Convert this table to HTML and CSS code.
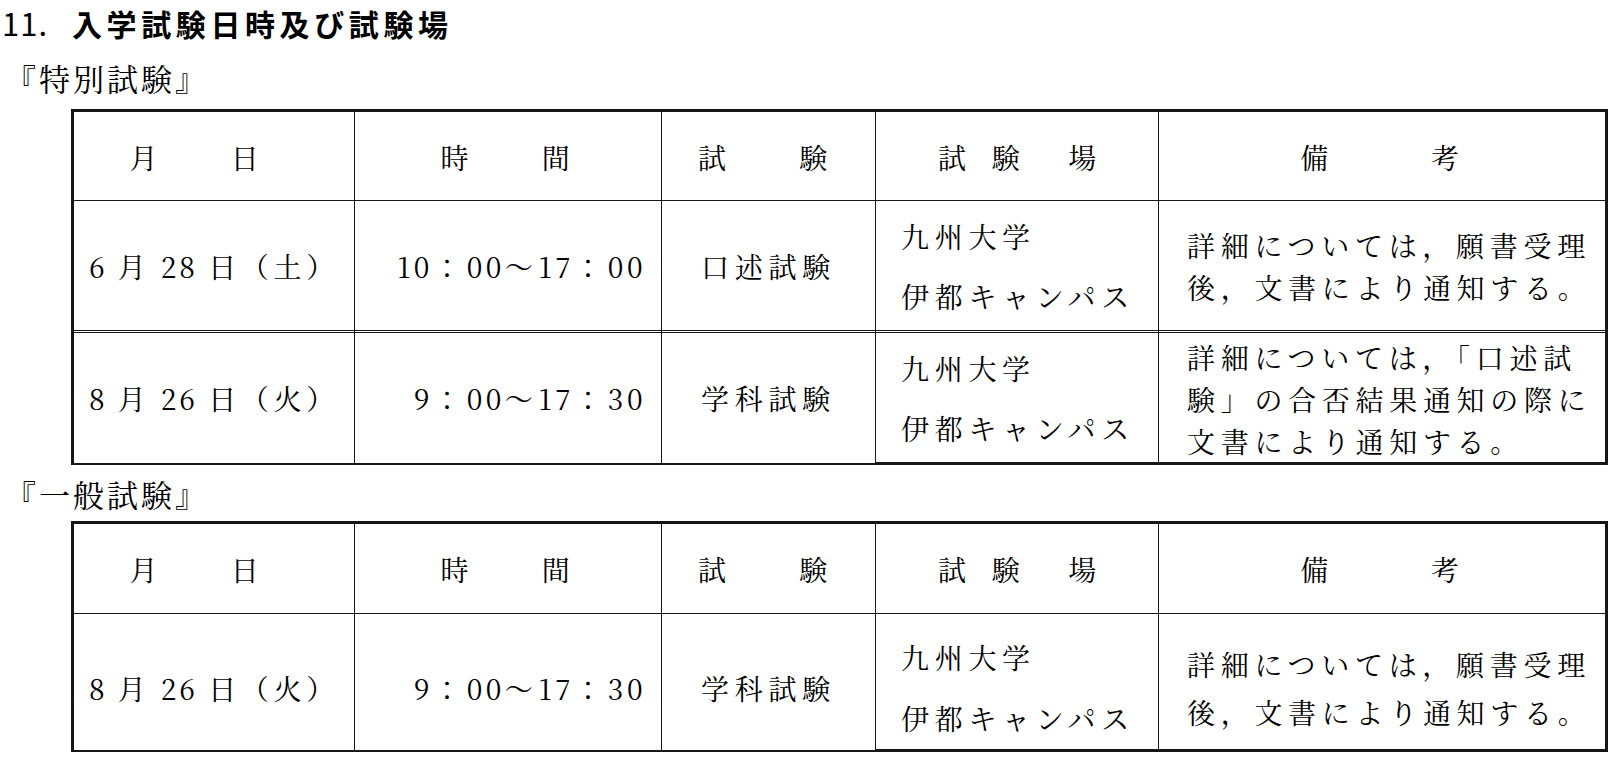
FILE: index.html
```html
<!DOCTYPE html>
<html lang="ja">
<head>
<meta charset="utf-8">
<title>入学試験日時及び試験場</title>
<link rel="stylesheet" href="styles.css">
</head>
<body>
<h1 class="title"><span class="num">11.</span>入学試験日時及び試験場</h1>
<p class="sub sub-first">『特別試験』</p>
<table class="sched sched-first">
  <colgroup>
    <col class="c1"><col class="c2"><col class="c3"><col class="c4"><col class="c5">
  </colgroup>
  <tr class="head">
    <td class="center h-date">月　　日</td>
    <td class="center">時　　間</td>
    <td class="center h-exam">試　　験</td>
    <td class="center h-place">試<span class="g1"></span>験<span class="g2"></span>場</td>
    <td class="center h-note last">備　　　考</td>
  </tr>
  <tr class="row row-a">
    <td class="center date"><span class="n">6 </span>月<span class="n"> 28 </span>日（土）</td>
    <td class="time"><span class="n">10</span>：<span class="n">00</span>～<span class="n">17</span>：<span class="n">00</span></td>
    <td class="center">口述試験</td>
    <td class="place">九州大学<br>伊都キャンパス</td>
    <td class="note last">詳細については，願書受理<br>後，文書により通知する。</td>
  </tr>
  <tr class="row row-b bottom">
    <td class="center date"><span class="n">8 </span>月<span class="n"> 26 </span>日（火）</td>
    <td class="time"><span class="n">9</span>：<span class="n">00</span>～<span class="n">17</span>：<span class="n">30</span></td>
    <td class="center">学科試験</td>
    <td class="place heavy">九州大学<br>伊都キャンパス</td>
    <td class="note note-three last heavy">詳細については，「口述試<br>験」の合否結果通知の際に<br>文書により通知する。</td>
  </tr>
</table>
<p class="sub sub-second">『一般試験』</p>
<table class="sched sched-second">
  <colgroup>
    <col class="c1"><col class="c2"><col class="c3"><col class="c4"><col class="c5">
  </colgroup>
  <tr class="head">
    <td class="center h-date">月　　日</td>
    <td class="center">時　　間</td>
    <td class="center h-exam">試　　験</td>
    <td class="center h-place">試<span class="g1"></span>験<span class="g2"></span>場</td>
    <td class="center h-note last">備　　　考</td>
  </tr>
  <tr class="row row-c bottom">
    <td class="center date"><span class="n">8 </span>月<span class="n"> 26 </span>日（火）</td>
    <td class="time"><span class="n">9</span>：<span class="n">00</span>～<span class="n">17</span>：<span class="n">30</span></td>
    <td class="center">学科試験</td>
    <td class="place wide heavy">九州大学<br>伊都キャンパス</td>
    <td class="note wide last heavy">詳細については，願書受理<br>後，文書により通知する。</td>
  </tr>
</table>
</body>
</html>
```

FILE: styles.css
```css
html, body {
  margin: 0;
  padding: 0;
  background: #ffffff;
}

body {
  color: #000000;
  font-family: "Noto Serif CJK JP", "Noto Sans CJK JP", serif;
}

.title {
  margin: 0;
  padding-left: 2px;
  font-family: "Noto Sans CJK JP", sans-serif;
  font-weight: 700;
  font-size: 30px;
  line-height: 46px;
  letter-spacing: 4.6px;
}

.title .num {
  display: inline-block;
  width: 70px;
  letter-spacing: 1px;
  font-weight: 400;
  font-size: 31px;
}

.sub {
  margin: 0;
  padding-left: 5px;
  font-size: 31px;
  line-height: 40px;
  letter-spacing: 3px;
  text-spacing-trim: space-all;
}

.sub-first {
  margin-top: 12px;
}

.sub-second {
  margin-top: 9px;
}

.sched {
  border-collapse: separate;
  border-spacing: 0;
  table-layout: fixed;
  width: 1537px;
  margin-left: 71px;
  border-top: 3px solid #161616;
  border-left: 3px solid #161616;
  border-right: 3px solid #161616;
  font-size: 28px;
  letter-spacing: 5.7px;
}

.sched-first {
  margin-top: 11px;
}

.sched-second {
  margin-top: 7px;
}

.c1 { width: 281px; }
.c2 { width: 307px; }
.c3 { width: 214px; }
.c4 { width: 283px; }
.c5 { width: 446px; }

.sched td {
  padding: 0;
  border-right: 1px solid #161616;
  vertical-align: middle;
  white-space: nowrap;
  line-height: 40px;
}

.sched td.last {
  border-right: none;
}

.head td {
  height: 89px;
  border-bottom: 1px solid #161616;
  padding-top: 2px;
  box-sizing: border-box;
}

.sched-second .head td {
  height: 90px;
  padding-top: 0;
}

.head td.h-date {
  padding-right: 34px;
}

.head td.h-exam {
  padding-right: 6px;
}

.head td.h-place {
  padding-left: 6px;
}

.head td.h-note {
  letter-spacing: 4.7px;
}

.row-a td {
  height: 132px;
  box-sizing: border-box;
  border-bottom: 3px double #161616;
}

.row-b td {
  height: 130px;
  box-sizing: border-box;
}

.row-c td {
  height: 138px;
  box-sizing: border-box;
  padding-top: 12px;
}

.bottom td {
  border-bottom: 2px solid #161616;
}

.bottom td.heavy {
  border-bottom: 3px solid #161616;
}

.center {
  text-align: center;
}

.date {
  letter-spacing: 4.7px;
}

.n {
  letter-spacing: 3.5px;
}

.date .n {
  letter-spacing: 3px;
}

.g1 {
  display: inline-block;
  width: 20px;
}

.g2 {
  display: inline-block;
  width: 43px;
}

.time {
  text-align: right;
  padding-right: 15px !important;
}

.place {
  padding-left: 25px !important;
  line-height: 60px !important;
}

.place.wide {
  line-height: 61px !important;
}

.note {
  padding-left: 28px !important;
  line-height: 42px !important;
}

.note.note-three {
  padding-top: 3px !important;
}

.note.wide {
  line-height: 48px !important;
}
```
